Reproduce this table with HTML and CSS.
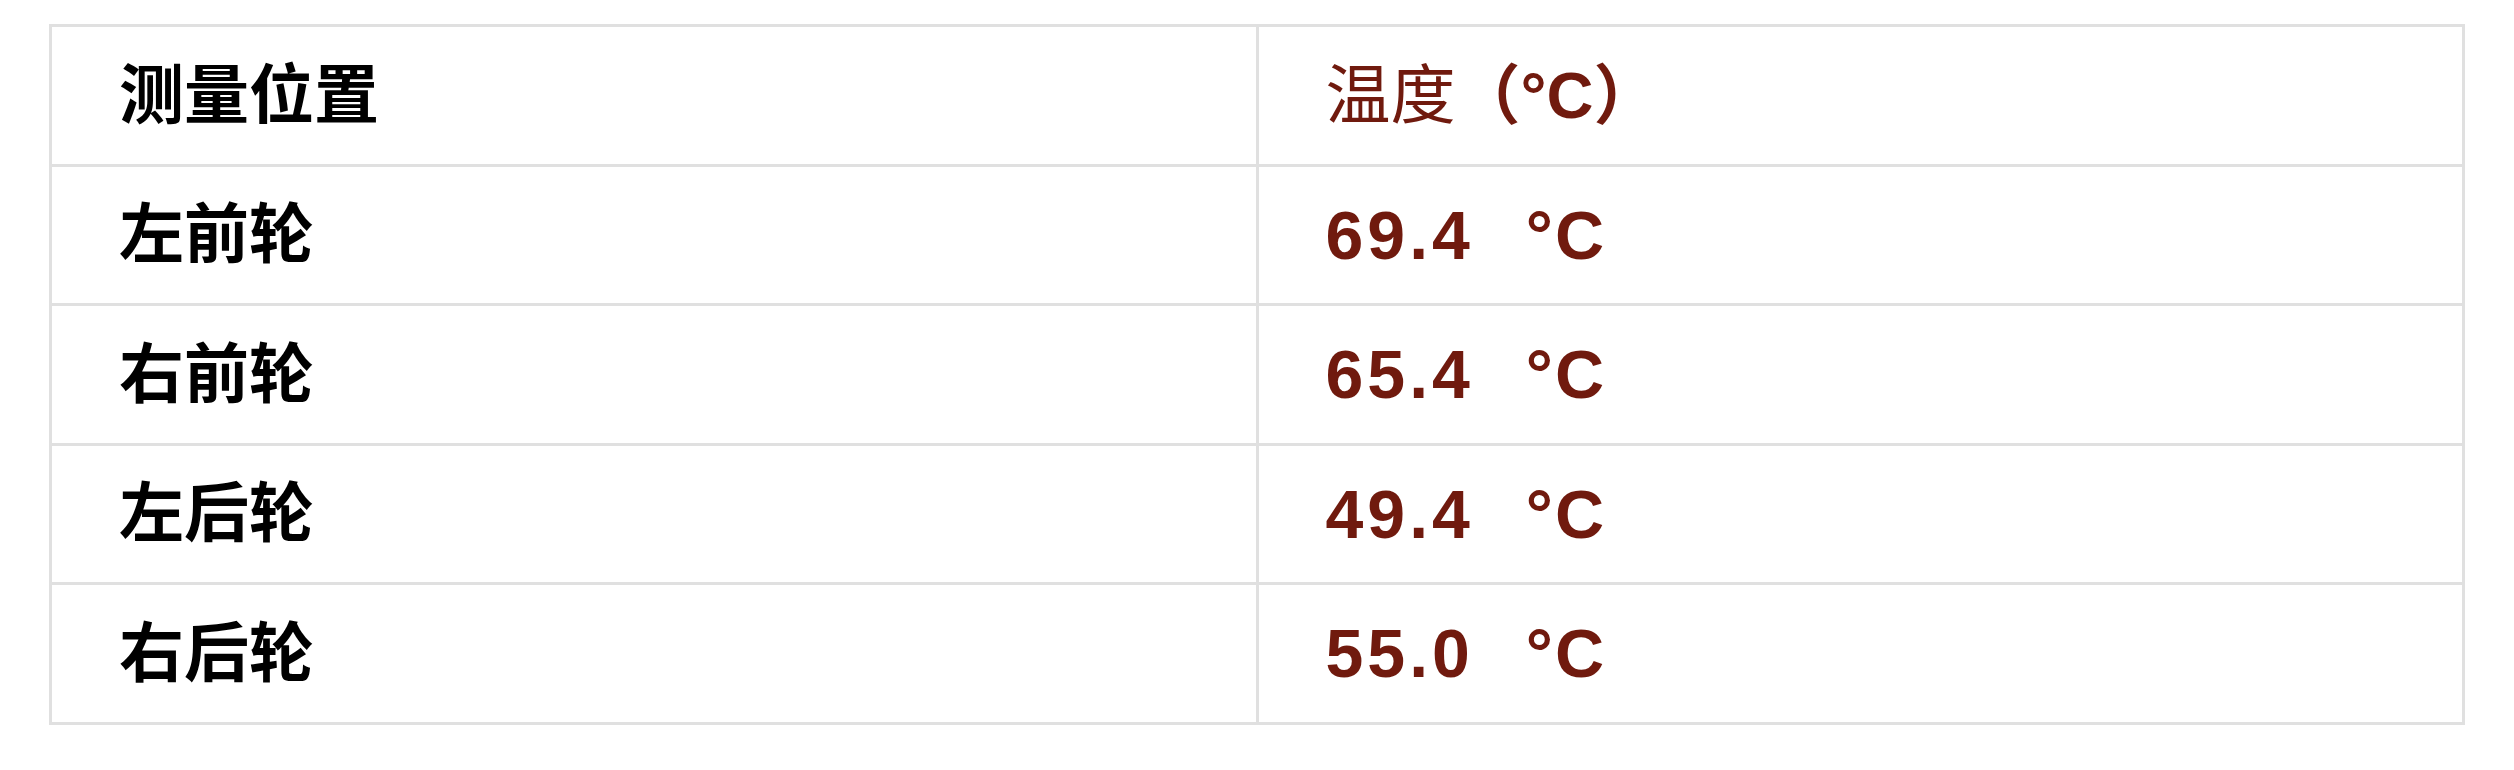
FILE: index.html
```html
<!DOCTYPE html>
<html lang="zh-CN">
<head>
<meta charset="utf-8">
<title>轮胎温度</title>
<link rel="stylesheet" href="styles.css">
</head>
<body>
<main class="page">
  <table class="temp-table">
    <colgroup>
      <col class="col-half">
      <col class="col-half">
    </colgroup>
    <thead>
      <tr>
        <th class="col-pos">测量位置</th>
        <th class="col-temp">温度<span class="unit-head">（°C）</span></th>
      </tr>
    </thead>
    <tbody>
      <tr>
        <td class="pos">左前轮</td>
        <td class="val"><span class="num">69.4</span><span class="unit">°C</span></td>
      </tr>
      <tr>
        <td class="pos">右前轮</td>
        <td class="val"><span class="num">65.4</span><span class="unit">°C</span></td>
      </tr>
      <tr>
        <td class="pos">左后轮</td>
        <td class="val"><span class="num">49.4</span><span class="unit">°C</span></td>
      </tr>
      <tr>
        <td class="pos">右后轮</td>
        <td class="val"><span class="num">55.0</span><span class="unit">°C</span></td>
      </tr>
    </tbody>
  </table>
</main>
</body>
</html>
```
FILE: styles.css
```css
html, body {
  margin: 0;
  padding: 0;
  background: #ffffff;
}

.page {
  padding: 24px 49px 0 49px;
  font-family: "Liberation Sans", "Noto Sans CJK SC", sans-serif;
}

.temp-table {
  width: 100%;
  border-collapse: collapse;
  table-layout: fixed;
  border: 3px solid #e0e0e0;
}

.col-half {
  width: 50%;
}

.temp-table th,
.temp-table td {
  box-sizing: border-box;
  border: 3px solid #e0e0e0;
  height: 139.5px;
  padding: 0 0 0 67px;
  text-align: left;
  vertical-align: middle;
  font-size: 65px;
  line-height: 1;
  white-space: nowrap;
}

.col-pos {
  font-weight: 700;
  color: #000000;
}

.col-temp {
  font-weight: 400;
  color: #701a0e;
}

.unit-head {
  font-weight: 700;
}

.pos {
  font-weight: 700;
  color: #000000;
}

.val {
  font-weight: 700;
  color: #701a0e;
}

.num {
  font-size: 68px;
  letter-spacing: 4px;
}

.unit {
  font-size: 68px;
  margin-left: 52px;
  letter-spacing: 2px;
}
```
